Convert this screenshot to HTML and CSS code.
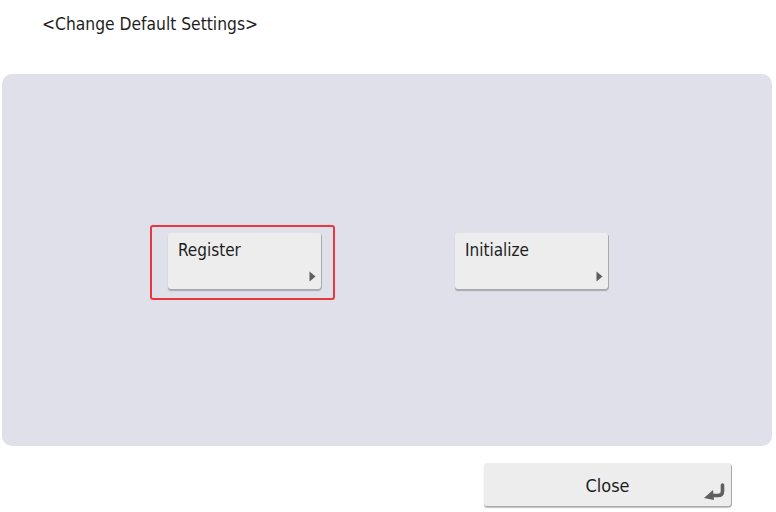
FILE: index.html
```html
<!DOCTYPE html>
<html>
<head>
<meta charset="utf-8">
<link rel="stylesheet" href="styles.css">
</head>
<body>
<div class="screen">
  <div class="title">&lt;Change Default Settings&gt;</div>
  <div class="panel">
    <div class="row">
      <div class="highlight">
        <div class="btn">
          <span class="label">Register</span>
          <svg class="arrow" width="7" height="11" viewBox="0 0 7 11"><path d="M0.5 0.5 L6.5 5.5 L0.5 10.5 Z" fill="#5e5e5e"/></svg>
        </div>
      </div>
      <div class="btn plain">
        <span class="label">Initialize</span>
        <svg class="arrow" width="7" height="11" viewBox="0 0 7 11"><path d="M0.5 0.5 L6.5 5.5 L0.5 10.5 Z" fill="#5e5e5e"/></svg>
      </div>
    </div>
  </div>
  <div class="footer">
    <div class="close">
      <span class="close-label">Close</span>
      <svg class="ret" width="24" height="18" viewBox="0 0 24 18"><path d="M19.5 2 L19.5 8 Q19.5 12.5 15 12.5 L9 12.5" fill="none" stroke="#5f5f5f" stroke-width="3.6" stroke-linecap="round"/><path d="M1 15 L10 7 L11 17 Z" fill="#5f5f5f"/></svg>
    </div>
  </div>
</div>
</body>
</html>
```
FILE: styles.css
```css
* { box-sizing: border-box; }
html, body { margin: 0; padding: 0; background: #ffffff; }
body { width: 776px; height: 512px; overflow: hidden; font-family: "DejaVu Sans Condensed", "DejaVu Sans", sans-serif; color: #1e1e1e; }
.screen { display: flex; flex-direction: column; }
.title { font-size: 17.3px; padding: 14px 0 0 42px; height: 74px; }
.panel { margin: 0 4px 0 2px; height: 372px; background: #dfe0ea; border-radius: 10px; display: flex; align-items: flex-start; }
.row { display: flex; align-items: flex-start; padding-left: 148px; margin-top: 151px; }
.highlight { border: 2px solid #e8383d; border-radius: 3px; padding: 6px 12px 9px 16px; }
.btn { position: relative; width: 153px; height: 56px; background: #ededed; border-radius: 3px; box-shadow: 1px 1px 0 #a9a9ae, 0 2px 1px rgba(0,0,0,0.25); padding: 7px 0 0 10px; }
.plain { margin-left: 120px; margin-top: 8px; }
.label { font-size: 17px; }
.arrow { position: absolute; right: 5px; bottom: 7px; }
.footer { display: flex; justify-content: flex-end; padding: 17px 45px 0 0; }
.close { position: relative; width: 247px; height: 43px; background: #ededed; border-radius: 3px; box-shadow: 1px 1px 0 #a9a9ae, 0 2px 1px rgba(0,0,0,0.25); display: flex; align-items: center; justify-content: center; }
.close-label { font-size: 18px; margin-top: 1px; }
.ret { position: absolute; right: 4px; bottom: 5px; }
```
